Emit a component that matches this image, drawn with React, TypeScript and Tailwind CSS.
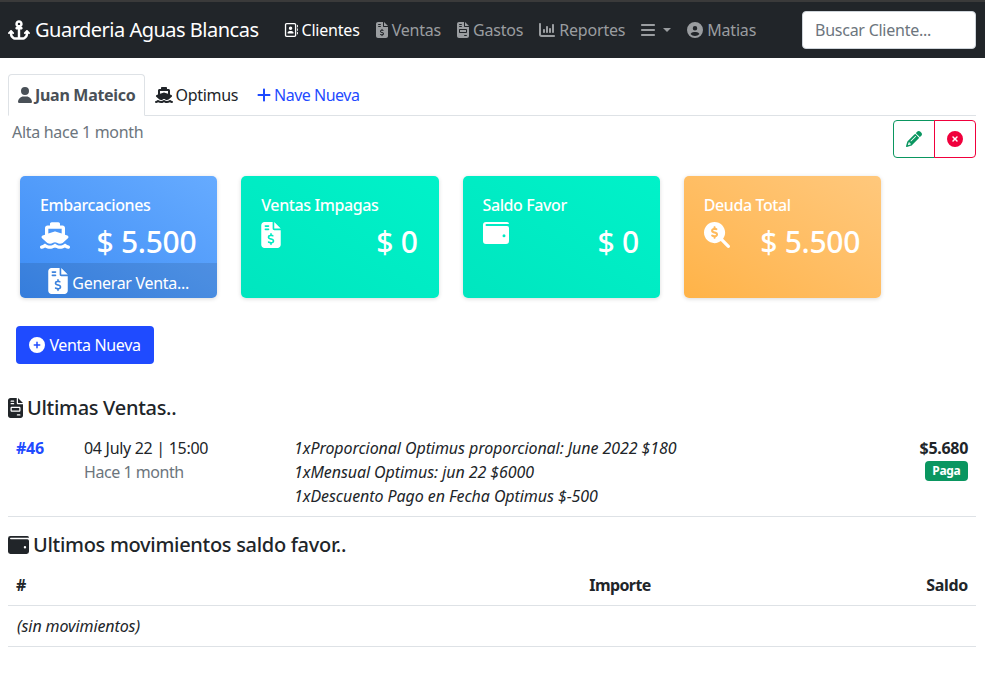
import { FaAnchor, FaRegAddressBook, FaFileInvoiceDollar, FaFileInvoice, FaChartColumn, FaBars, FaCircleUser, FaUser, FaShip, FaPlus, FaPencil, FaCircleXmark, FaMagnifyingGlassDollar, FaCirclePlus } from 'react-icons/fa6';

const font = { fontFamily: '"Noto Sans", "Liberation Sans", sans-serif' };

// the wallet in the packages has a curved flap, this one has the straight strip of the picture
function Wallet({ className }: { className: string }) {
  return (
    <svg viewBox="0 0 26 22" className={className} fill="currentColor" fillRule="evenodd">
      <path d="M3 0H24a2 2 0 0 1 2 2H3.5a1 1 0 0 0 0 2H24a2 2 0 0 1 2 2V19a3 3 0 0 1-3 3H3a3 3 0 0 1-3-3V3a3 3 0 0 1 3-3ZM21 12.2a1.5 1.5 0 1 0 0 3a1.5 1.5 0 1 0 0-3Z" />
    </svg>
  );
}

function NavLink({ icon, label, active }: { icon: React.ReactNode; label: string; active?: boolean }) {
  return (
    <a className={`flex items-center gap-[4px] px-2 tracking-[-0.2px] ${active ? 'text-white' : 'text-[#9a9da0]'}`}>
      {icon}
      <span>{label}</span>
    </a>
  );
}

function StatCard({ title, value, icon, className, footer }: { title: string; value: string; icon: React.ReactNode; className: string; footer?: boolean }) {
  return (
    <div className="px-3">
      <div className={`relative h-[122px] rounded-[5px] overflow-hidden text-white shadow-[0_1px_4px_rgba(0,0,0,0.15)] ${className}`}>
        <div className="px-5 pt-[17px]">
          <div className="font-medium leading-[24px] tracking-[-0.4px]">{title}</div>
          <div className="flex justify-between items-start">
            <div className="pt-[5px]">{icon}</div>
            <div className="text-[30px] leading-[38px] font-medium pt-[6px] mr-[1px]">{value}</div>
          </div>
        </div>
        {footer && (
          <div className="absolute bottom-0 left-0 right-0 h-[35px] bg-black/10 flex items-center justify-center gap-[4px] tracking-[-0.3px]">
            <FaFileInvoiceDollar className="w-[20px] h-[26px]" />
            <span className="pt-[5px]">Generar Venta...</span>
          </div>
        )}
      </div>
    </div>
  );
}

export default function App() {
  return (
    <div className="w-[985px] h-[680px] overflow-hidden bg-white text-[#212529] text-base" style={font}>
      <nav className="h-[58px] bg-[#212529] border-t-2 border-[#3a3a3a] flex items-center pl-2 pr-[9px]">
        <a className="flex items-center gap-[5px] text-white text-[20px] mr-[17px] tracking-[-0.5px]">
          <FaAnchor className="w-[22px] h-[20px]" />
          <span>Guarderia Aguas Blancas</span>
        </a>
        <NavLink active icon={<FaRegAddressBook className="w-[14px] h-[16px]" />} label="Clientes" />
        <NavLink icon={<FaFileInvoiceDollar className="w-[12px] h-[16px]" />} label="Ventas" />
        <NavLink icon={<FaFileInvoice className="w-[12px] h-[16px]" />} label="Gastos" />
        <NavLink icon={<FaChartColumn className="w-[16px] h-[16px]" />} label="Reportes" />
        <a className="flex items-center gap-[8px] px-2 text-[#9a9da0]">
          <FaBars className="w-[14px] h-[16px]" />
          <span className="w-0 h-0 border-x-[4px] border-x-transparent border-t-[4px] border-t-[#9a9da0]" />
        </a>
        <NavLink icon={<FaCircleUser className="w-[16px] h-[16px]" />} label="Matias" />
        <div className="ml-auto w-[174px] h-[38px] bg-white rounded-[4px] border border-[#ced4da] flex items-center px-3 text-[#6c757d] tracking-[-0.25px]">Buscar Cliente...</div>
      </nav>

      <div className="pl-2 pr-[9px] pt-4 tracking-[-0.3px]">
        <div className="flex h-[42px] border-b border-[#dee2e6]">
          <a className="flex items-center gap-[3px] h-[42px] px-[9px] font-bold text-[#495057] bg-white border border-[#dee2e6] border-b-white rounded-t-[4px]">
            <FaUser className="w-[14px] h-[16px]" />
            Juan Mateico
          </a>
          <a className="flex items-center gap-[2px] px-[10px]">
            <FaShip className="w-[18px] h-[16px]" />
            Optimus
          </a>
          <a className="flex items-center gap-[3px] px-[9px] text-[#1f4bff] tracking-[-0.5px]">
            <FaPlus className="w-[14px] h-[16px]" />
            Nave Nueva
          </a>
        </div>

        <div className="flex justify-between pt-[4px]">
          <div className="pl-1 text-[#6c757d] leading-[24px]">Alta hace 1 month</div>
          <div className="flex h-[38px]">
            <button className="w-[42px] flex items-center justify-center border border-[#0a9660] rounded-l-[4px] text-[#0a9660]"><FaPencil className="w-[16px] h-[16px]" /></button>
            <button className="w-[42px] -ml-px flex items-center justify-center border border-[#f0003c] rounded-r-[4px] text-[#f0003c]"><FaCircleXmark className="w-[16px] h-[16px]" /></button>
          </div>
        </div>

        <div className="grid grid-cols-4 w-[885px] mt-[18px]">
          <StatCard footer title="Embarcaciones" value="$ 5.500" className="bg-gradient-to-tr from-[#3c8cf5] to-[#66abff]" icon={<FaShip className="w-[30px] h-[27px]" />} />
          <StatCard title="Ventas Impagas" value="$ 0" className="bg-gradient-to-tr from-[#00e6bf] to-[#00f2c9]" icon={<FaFileInvoiceDollar className="w-[20px] h-[26px]" />} />
          <StatCard title="Saldo Favor" value="$ 0" className="bg-gradient-to-tr from-[#00e6bf] to-[#00f2c9]" icon={<Wallet className="w-[26px] h-[22px]" />} />
          <StatCard title="Deuda Total" value="$ 5.500" className="bg-gradient-to-tr from-[#ffb347] to-[#ffc87c]" icon={<FaMagnifyingGlassDollar className="w-[26px] h-[26px]" />} />
        </div>

        <button className="mt-[28px] ml-2 h-[38px] w-[138px] rounded-[4px] bg-[#1f4bff] text-white flex items-center justify-center gap-[4px] tracking-[-0.35px]">
          <FaCirclePlus className="w-[16px] h-[16px]" />
          Venta Nueva
        </button>

        <h5 className="mt-[32px] flex items-center gap-[4px] text-[20px] font-medium leading-[24px]">
          <FaFileInvoice className="w-[15px] h-[20px]" />
          Ultimas Ventas..
        </h5>

        <div className="mt-[16px] flex h-[81px] border-b border-[#dee2e6] leading-[24px]">
          <div className="w-[76px] pl-2 font-bold text-[#1f4bff]">#46</div>
          <div className="w-[211px]">
            <div>04 July 22 | 15:00</div>
            <div className="text-[#6c757d] tracking-[-0.45px]">Hace 1 month</div>
          </div>
          <div className="flex-1 italic tracking-[-0.07px] -ml-px">
            <div>1xProporcional Optimus proporcional: June 2022 $180</div>
            <div>1xMensual Optimus: jun 22 $6000</div>
            <div>1xDescuento Pago en Fecha Optimus $-500</div>
          </div>
          <div className="pr-2 flex flex-col items-end">
            <div className="font-bold">$5.680</div>
            <span className="mt-[1px] h-[20px] px-[7.5px] rounded-[4px] bg-[#0a9660] text-white text-[12px] font-bold flex items-center">Paga</span>
          </div>
        </div>

        <h5 className="mt-[16px] flex items-center gap-[4px] text-[20px] font-medium leading-[24px]">
          <Wallet className="w-[21px] h-[18px]" />
          Ultimos movimientos saldo favor..
        </h5>

        <div className="mt-[8px] flex h-[41px] items-center border-b border-[#dee2e6] px-2 font-bold">
          <div className="w-[569px]">#</div>
          <div className="w-[70px] text-center whitespace-nowrap tracking-[-0.6px]">Importe</div>
          <div className="flex-1 text-right">Saldo</div>
        </div>
        <div className="h-[41px] flex items-center border-b border-[#dee2e6] pl-[9px] italic tracking-[-0.1px]">(sin movimientos)</div>
      </div>
    </div>
  );
}
